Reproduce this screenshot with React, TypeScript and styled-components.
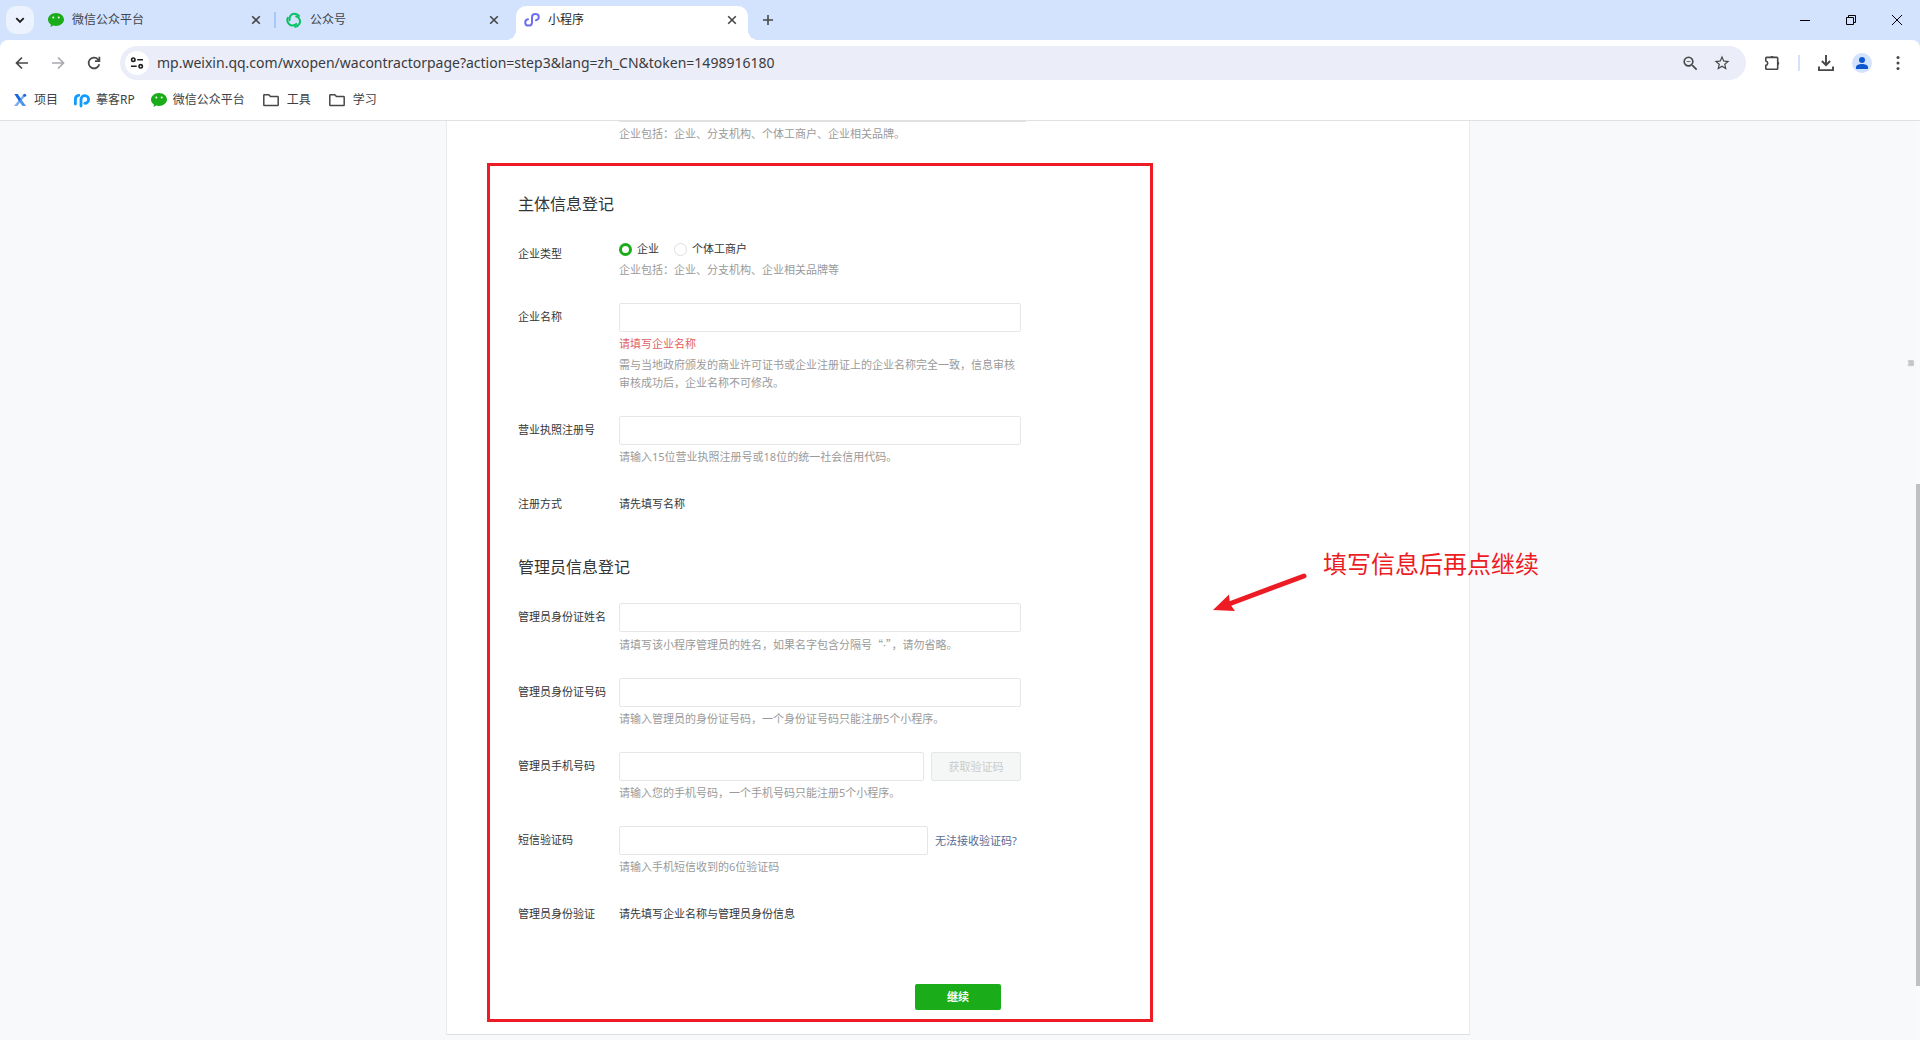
import React from "react";
import styled, { createGlobalStyle } from "styled-components";
import { MdStarBorder, MdZoomOut } from "react-icons/md";

const uiFont = '"Noto Sans", "Noto Sans CJK SC", sans-serif';
const red = "#ed1c24";

const GlobalStyle = createGlobalStyle`
  *, *::before, *::after { box-sizing: border-box; }
  body { margin: 0; background: #fff; font-family: ${uiFont}; font-size: 12px; color: #1f1f1f; overflow: hidden; }
  button, input { font: inherit; color: inherit; }
  svg { display: block; flex: none; }
`;

const Window = styled.div`
  display: flex;
  flex-direction: column;
  height: 100vh;
  min-width: 0;
  background: #d3e3fd;
`;

/* ---------- tab strip ---------- */

const TabStrip = styled.div`
  display: flex;
  align-items: center;
  height: 40px;
  padding-left: 6px;
`;

const IconButton = styled.button<{ $size?: number }>`
  display: flex;
  align-items: center;
  justify-content: center;
  flex: none;
  width: ${(p) => p.$size ?? 28}px;
  height: ${(p) => p.$size ?? 28}px;
  padding: 0;
  border: 0;
  border-radius: 50%;
  background: none;
  color: #474747;
`;

const TabSearch = styled(IconButton)`
  border-radius: 10px;
  background: #ecf3fe;
  margin-right: 6px;
  color: #1f1f1f;
`;

const Tabs = styled.div`
  display: flex;
  align-items: flex-end;
  align-self: stretch;
`;

const Tab = styled.div<{ $active?: boolean }>`
  position: relative;
  display: flex;
  align-items: center;
  gap: 8px;
  width: 232px;
  height: 34px;
  padding: 0 6px 6px 8px;
  border-radius: 10px 10px 0 0;
  background: ${(p) => (p.$active ? "#fff" : "transparent")};
  color: ${(p) => (p.$active ? "#1f1f1f" : "#40454d")};

  &::before,
  &::after {
    content: "";
    display: ${(p) => (p.$active ? "block" : "none")};
    position: absolute;
    bottom: 0;
    width: 10px;
    height: 10px;
  }
  &::before { right: 100%; background: radial-gradient(circle at 0 0, transparent 10px, #fff 10px); }
  &::after { left: 100%; background: radial-gradient(circle at 100% 0, transparent 10px, #fff 10px); }
`;

const TabTitle = styled.span`
  flex: 1;
  line-height: 18px;
  white-space: nowrap;
`;

const TabGap = styled.div<{ $line?: boolean }>`
  width: 6px;
  height: 16px;
  margin-bottom: 12px;
  padding: 0 2px;
  background: ${(p) => (p.$line ? "#a8c7fa" : "transparent")};
  background-clip: content-box;
`;

const NewTab = styled(IconButton)`
  margin-left: 6px;
`;

const WindowControls = styled.div`
  display: flex;
  margin-left: auto;
  color: #000;
`;

const WindowButton = styled(IconButton)`
  width: 46px;
  height: 40px;
  border-radius: 0;
  color: #000;
`;

/* ---------- toolbar ---------- */

const Chrome = styled.header`
  background: #fff;
  border-radius: 8px 8px 0 0;
  border-bottom: 1px solid #dfe1e5;
`;

const Toolbar = styled.div`
  display: flex;
  align-items: center;
  gap: 8px;
  padding: 6px 8px;
`;

const Omnibox = styled.div`
  display: flex;
  align-items: center;
  gap: 8px;
  flex: 1;
  height: 34px;
  margin: 0 4px;
  padding: 0 12px 0 5px;
  border-radius: 17px;
  background: #ebeef8;
`;

const SiteButton = styled(IconButton)`
  background: #fff;
  color: #1f1f1f;
`;

const Address = styled.input`
  flex: 1;
  min-width: 0;
  padding: 0;
  border: 0;
  outline: 0;
  background: none;
  font-family: "Noto Sans", sans-serif;
  font-size: 14px;
  line-height: 20px;
  color: #3a3b3e;
`;

const ToolbarLine = styled.div`
  width: 2px;
  height: 16px;
  margin: 0 4px;
  background: #d3e3fd;
`;

const Bookmarks = styled.nav`
  display: flex;
  align-items: center;
  gap: 16px;
  height: 28px;
  margin-bottom: 6px;
  padding-left: 12px;
`;

const Bookmark = styled.a`
  display: flex;
  align-items: center;
  gap: 6px;
  line-height: 18px;
  color: #3c3f43;
  text-decoration: none;
  white-space: nowrap;
`;

/* ---------- page ---------- */

const Viewport = styled.div`
  position: relative;
  display: flex;
  flex: 1;
  min-height: 0;
  overflow: hidden;
  background: #f8f9fb;
`;

const Content = styled.main`
  flex: 1;
  min-width: 0;
  font-size: 11px;
  line-height: 18px;
  color: #353535;
`;

const Card = styled.div`
  position: relative;
  max-width: 1024px;
  margin: 0 auto;
  padding: 0 40px 12px;
  border: 1px solid #e9ebed;
  border-top: 0;
  border-bottom-color: #dcdee0;
  background: #fff;
`;

const Previous = styled.div`
  width: 407px;
  margin: 0 0 20px 132px;
  padding-top: 3px;
  border-top: 1px solid #e0e0e0;
`;

const Highlight = styled.section`
  max-width: 666px;
  padding: 26px 28px 9px;
  border: 3px solid ${red};
`;

const Form = styled.form`
  display: flex;
  flex-direction: column;
  max-width: 503px;
`;

const Heading = styled.h2<{ $spaced?: boolean }>`
  margin: ${(p) => (p.$spaced ? 18 : 0)}px 0 24px;
  font-size: 16px;
  line-height: 24px;
  font-weight: 400;
`;

const Row = styled.div`
  display: grid;
  grid-template-columns: 101px 1fr;
  margin-bottom: 24px;
`;

const Label = styled.label`
  padding-top: 5px;
  white-space: nowrap;
`;

const Caption = styled.span`
  padding-top: 5px;
  white-space: nowrap;
`;

const Field = styled.div`
  display: flex;
  flex-direction: column;
  gap: 3px;
`;

const Controls = styled.div`
  display: flex;
  align-items: center;
  gap: 7px;
`;

const TextInput = styled.input`
  flex: 1;
  min-width: 0;
  height: 29px;
  padding: 0 8px;
  border: 1px solid #e4e6e8;
  border-radius: 2px;
  outline: 0;
  background: #fff;
`;

const Hint = styled.p<{ $error?: boolean }>`
  margin: 0;
  color: ${(p) => (p.$error ? "#e15f63" : "#9a9a9a")};
`;

/* Quotation marks set at full CJK width. */
const WideQuote = styled.span`
  font-family: "Noto Sans CJK SC", sans-serif;
`;

const CodeButton = styled.button`
  width: 90px;
  height: 29px;
  padding: 0;
  border: 1px solid #e4e6e8;
  border-radius: 2px;
  background: #f5f7f6;
  color: #c9cccb;
`;

const HelpLink = styled.a`
  width: 86px;
  color: #576b95;
  text-decoration: none;
  white-space: nowrap;
`;

const Radios = styled.div`
  display: flex;
  gap: 15px;
`;

const RadioLabel = styled.label`
  display: flex;
  align-items: center;
  gap: 5px;
`;

const Radio = styled.input`
  appearance: none;
  width: 13px;
  height: 13px;
  margin: 0;
  border: 1px solid #dcdfe0;
  border-radius: 50%;
  background: #fff;

  &:checked { border: 3px solid #1aad19; }
`;

const Actions = styled.div`
  display: flex;
  justify-content: flex-end;
  margin-top: 37px;
  padding-right: 20px;
`;

const Submit = styled.button`
  width: 86px;
  height: 26px;
  padding: 0;
  border: 0;
  border-radius: 2px;
  background: #1aad19;
  color: #fff;
  font-weight: 700;
`;

/* The note and its arrow are drawn over the card and its right margin. */
const Note = styled.aside`
  position: absolute;
  left: 766px;
  top: 425px;
  display: flex;
  gap: 16px;
  color: ${red};
  font-size: 24px;
  line-height: 36px;
  white-space: nowrap;

  svg { margin-top: 27px; }
`;

const ScrollTrack = styled.div`
  display: flex;
  flex-direction: column;
  width: 4px;
  padding: 363px 0 54px;
  background: #fafafa;
`;

const ScrollThumb = styled.div`
  flex: 1;
  background: #c1c1c1;
`;

const SidePuzzle = styled.div`
  position: absolute;
  right: 5px;
  top: 238px;
  color: #c4c6c9;
`;

/* ---------- drawings ---------- */

const Wechat = () => (
  <svg width="16" height="16" viewBox="0 0 16 16">
    <path fill="#1aad19" d="M8 1C3.6 1 0 3.9 0 7.6c0 2.100 1.200 3.900 3 5.100L2.400 15l2.900-1.500c.9.200 1.800.4 2.700.4 4.400 0 8-2.800 8-6.400S12.400 1 8 1z" />
    <circle cx="5.300" cy="5.600" r="1" fill="#fff" />
    <circle cx="10.700" cy="5.600" r="1" fill="#fff" />
  </svg>
);

const OfficialAccount = () => (
  <svg width="16" height="16" viewBox="0 0 16 16" fill="none" stroke="#07c160" strokeWidth="2" strokeLinecap="round">
    <path d="M3.600 8.200C2.900 4.500 5.300 1.700 8.400 1.700c2 0 3.700.9 4.700 2.300" />
    <path d="M3.600 8.200C2.900 4.500 5.300 1.700 8.400 1.700c2 0 3.700.9 4.700 2.300" transform="rotate(120 8 8.200)" />
    <path d="M3.600 8.200C2.900 4.500 5.300 1.700 8.400 1.700c2 0 3.700.9 4.700 2.300" transform="rotate(240 8 8.200)" />
  </svg>
);

const MiniProgram = () => (
  <svg width="16" height="16" viewBox="0 0 16 16" fill="none" stroke="#6f6ff2" strokeWidth="2" strokeLinecap="round">
    <path d="M4 7.300C2.300 7.600 1.200 8.700 1.200 10.400c0 1.800 1.500 3.200 3.400 3.200S8 12.300 8 10.400V5.200C8 3.400 9.500 2 11.400 2s3.400 1.300 3.400 3.100c0 1.700-1.200 2.800-2.900 3.200" />
  </svg>
);

const Cross = () => (
  <svg width="20" height="20" viewBox="0 0 20 20" stroke="currentColor" strokeWidth="1.600">
    <path d="M6.200 6.200l7.600 7.600M13.800 6.200l-7.600 7.600" />
  </svg>
);

const BookmarkX = () => (
  <svg width="16" height="16" viewBox="0 0 16 16">
    <path fill="#7fb0ee" d="M2 14h3.400l8.200-10.500-1.800-1.500z" />
    <path fill="#1668dc" d="M2.300 2h3.500l3.400 5.200-2 2.200z" />
    <path fill="#4f92ea" d="M9.200 7.200L14 14h-3.600L7.200 9.400z" />
    <circle cx="12.700" cy="3.300" r="1.500" fill="#1668dc" />
  </svg>
);

const RpLogo = () => (
  <svg width="16" height="16" viewBox="0 0 16 16" fill="none" stroke="#0f9bff" strokeWidth="2.800" strokeLinecap="round">
    <path d="M1.400 12V7.200c0-2.300 1.200-3.700 3.400-3.800" />
    <path d="M7 14V7.400a3.800 3.800 0 1 1 3.800 3.900" />
  </svg>
);

const Folder = () => (
  <svg width="20" height="16" viewBox="0 0 20 16" fill="none" stroke="#474747" strokeWidth="1.500" strokeLinejoin="round">
    <path d="M2.800 13V3.300c0-.3.200-.6.600-.6h4.400l1.700 1.900h7.100c.4 0 .6.300.6.600V13c0 .3-.2.600-.6.600H3.400c-.4 0-.6-.3-.6-.6z" />
  </svg>
);

const Arrow = ({ flip }: { flip?: boolean }) => (
  <svg width="16" height="16" viewBox="0 0 16 16" fill="none" stroke={flip ? "#a9abae" : "#474747"} strokeWidth="1.700">
    <path d={flip ? "M2 8h11.500M8 2.500L13.500 8 8 13.500" : "M14 8H2.500M8 2.500L2.500 8 8 13.500"} />
  </svg>
);

const Puzzle = ({ size, solid }: { size: number; solid?: boolean }) => (
  <svg width={size} height={size} viewBox="0 0 18 18" fill={solid ? "currentColor" : "none"} stroke="currentColor" strokeWidth="1.600" strokeLinejoin="round">
    <path d="M3.600 3.400h10.300c.5 0 .8.300.8.800v10.200c0 .5-.3.800-.8.800H3.600c-.5 0-.8-.3-.8-.8v-3c1.200-.3 1.900-1.100 1.900-2.200s-.7-1.900-1.900-2.200V4.200c0-.5.3-.8.800-.8z" />
    <path d="M7.200 3.200a1.900 1.900 0 0 1 3.600 0zM15 7.400a1.900 1.900 0 0 1 0 3.600z" fill="currentColor" stroke="none" />
  </svg>
);

const tabs = [
  { title: "微信公众平台", icon: <Wechat /> },
  { title: "公众号", icon: <OfficialAccount /> },
  { title: "小程序", icon: <MiniProgram />, active: true },
];

const bookmarks = [
  { title: "项目", icon: <BookmarkX /> },
  { title: "摹客RP", icon: <RpLogo /> },
  { title: "微信公众平台", icon: <Wechat /> },
  { title: "工具", icon: <Folder /> },
  { title: "学习", icon: <Folder /> },
];

type FieldRowProps = {
  id: string;
  label: string;
  hint: React.ReactNode;
  error?: string;
  extra?: React.ReactNode;
};

const FieldRow = ({ id, label, hint, error, extra }: FieldRowProps) => (
  <Row>
    <Label htmlFor={id}>{label}</Label>
    <Field>
      <Controls>
        <TextInput id={id} type="text" />
        {extra}
      </Controls>
      {error && <Hint $error>{error}</Hint>}
      <Hint>{hint}</Hint>
    </Field>
  </Row>
);

const StaticRow = ({ label, text }: { label: string; text: string }) => (
  <Row>
    <Caption>{label}</Caption>
    <Caption>{text}</Caption>
  </Row>
);

export default function App() {
  return (
    <Window>
      <GlobalStyle />
      <TabStrip>
        <TabSearch aria-label="搜索标签页">
          <svg width="12" height="12" viewBox="0 0 12 12" fill="none" stroke="currentColor" strokeWidth="1.900">
            <path d="M2.300 4.200L6 7.900l3.700-3.700" />
          </svg>
        </TabSearch>
        <Tabs>
          {tabs.map((t, i) => (
            <React.Fragment key={t.title}>
              <Tab $active={t.active}>
                {t.icon}
                <TabTitle>{t.title}</TabTitle>
                <IconButton $size={20} aria-label="关闭标签页">
                  <Cross />
                </IconButton>
              </Tab>
              {i < 2 && <TabGap $line={i === 0} />}
            </React.Fragment>
          ))}
        </Tabs>
        <NewTab aria-label="新建标签页">
          <svg width="12" height="12" viewBox="0 0 12 12" stroke="currentColor" strokeWidth="1.600">
            <path d="M6 1v10M1 6h10" />
          </svg>
        </NewTab>
        <WindowControls>
          <WindowButton aria-label="最小化">
            <svg width="10" height="10" viewBox="0 0 10 10"><path d="M0 5h10v1H0z" /></svg>
          </WindowButton>
          <WindowButton aria-label="还原">
            <svg width="10" height="10" viewBox="0 0 10 10" fill="none" stroke="currentColor">
              <path d="M.5 2.500h7v7h-7zM2.500 2.500v-2h7v7h-2" />
            </svg>
          </WindowButton>
          <WindowButton aria-label="关闭">
            <svg width="10" height="10" viewBox="0 0 10 10" stroke="currentColor"><path d="M0 0l10 10M10 0L0 10" /></svg>
          </WindowButton>
        </WindowControls>
      </TabStrip>

      <Chrome>
        <Toolbar>
          <IconButton aria-label="后退"><Arrow /></IconButton>
          <IconButton aria-label="前进"><Arrow flip /></IconButton>
          <IconButton aria-label="重新加载">
            <svg width="16" height="16" viewBox="0 0 16 16" fill="none" stroke="currentColor" strokeWidth="1.700">
              <path d="M13.300 9.300A5.400 5.400 0 1 1 12 4.300l1.200 1.400" />
              <path d="M13.400 1.700v4.400H9" />
            </svg>
          </IconButton>
          <Omnibox>
            <SiteButton $size={24} aria-label="查看网站信息">
              <svg width="14" height="14" viewBox="0 0 14 14" fill="none" stroke="currentColor" strokeWidth="1.600">
                <circle cx="3.300" cy="3.700" r="1.700" />
                <path d="M7.300 3.700H13M1 10.300h5.700" />
                <circle cx="10.700" cy="10.300" r="1.700" />
              </svg>
            </SiteButton>
            <Address
              type="text"
              aria-label="地址栏"
              defaultValue="mp.weixin.qq.com/wxopen/wacontractorpage?action=step3&lang=zh_CN&token=1498916180"
            />
            <IconButton $size={24} aria-label="缩放">
              <MdZoomOut size={19} />
            </IconButton>
            <IconButton $size={24} aria-label="收藏">
              <MdStarBorder size={18} />
            </IconButton>
          </Omnibox>
          <IconButton aria-label="扩展程序">
            <Puzzle size={18} />
          </IconButton>
          <ToolbarLine />
          <IconButton aria-label="下载">
            <svg width="18" height="18" viewBox="0 0 18 18" fill="none" stroke="currentColor" strokeWidth="1.900">
              <path d="M9 1v9.800M4.900 7L9 11.100 13.100 7M2 12.400v3.700h14v-3.700" />
            </svg>
          </IconButton>
          <IconButton aria-label="个人资料">
            <svg width="20" height="20" viewBox="0 0 20 20">
              <circle cx="10" cy="10" r="10" fill="#d3e3fd" />
              <circle cx="10" cy="7" r="3" fill="#0b57d0" />
              <path d="M4 16v-1.700c0-2.300 3.200-3.300 6-3.300s6 1 6 3.300V16z" fill="#0b57d0" />
            </svg>
          </IconButton>
          <IconButton aria-label="更多">
            <svg width="16" height="16" viewBox="0 0 16 16" fill="currentColor">
              <circle cx="8" cy="2.600" r="1.500" />
              <circle cx="8" cy="8" r="1.500" />
              <circle cx="8" cy="13.400" r="1.500" />
            </svg>
          </IconButton>
        </Toolbar>
        <Bookmarks>
          {bookmarks.map((b) => (
            <Bookmark key={b.title} href="#">
              {b.icon}
              {b.title}
            </Bookmark>
          ))}
        </Bookmarks>
      </Chrome>

      <Viewport>
        <Content>
          <Card>
            <Previous>
              <Hint>企业包括：企业、分支机构、个体工商户、企业相关品牌。</Hint>
            </Previous>
            <Highlight>
              <Form onSubmit={(e) => e.preventDefault()}>
                <Heading>主体信息登记</Heading>
                <Row>
                  <Caption>企业类型</Caption>
                  <Field>
                    <Radios role="radiogroup" aria-label="企业类型">
                      <RadioLabel>
                        <Radio type="radio" name="kind" defaultChecked />
                        企业
                      </RadioLabel>
                      <RadioLabel>
                        <Radio type="radio" name="kind" />
                        个体工商户
                      </RadioLabel>
                    </Radios>
                    <Hint>企业包括：企业、分支机构、企业相关品牌等</Hint>
                  </Field>
                </Row>
                <FieldRow
                  id="company"
                  label="企业名称"
                  error="请填写企业名称"
                  hint="需与当地政府颁发的商业许可证书或企业注册证上的企业名称完全一致，信息审核审核成功后，企业名称不可修改。"
                />
                <FieldRow id="license" label="营业执照注册号" hint="请输入15位营业执照注册号或18位的统一社会信用代码。" />
                <StaticRow label="注册方式" text="请先填写名称" />

                <Heading $spaced>管理员信息登记</Heading>
                <FieldRow
                  id="admin-name"
                  label="管理员身份证姓名"
                  hint={
                    <>
                      请填写该小程序管理员的姓名，如果名字包含分隔号<WideQuote>“</WideQuote>·<WideQuote>”</WideQuote>，请勿省略。
                    </>
                  }
                />
                <FieldRow
                  id="admin-id"
                  label="管理员身份证号码"
                  hint="请输入管理员的身份证号码，一个身份证号码只能注册5个小程序。"
                />
                <FieldRow
                  id="admin-phone"
                  label="管理员手机号码"
                  hint="请输入您的手机号码，一个手机号码只能注册5个小程序。"
                  extra={<CodeButton type="button" disabled>获取验证码</CodeButton>}
                />
                <FieldRow
                  id="sms-code"
                  label="短信验证码"
                  hint="请输入手机短信收到的6位验证码"
                  extra={<HelpLink href="#">无法接收验证码?</HelpLink>}
                />
                <StaticRow label="管理员身份验证" text="请先填写企业名称与管理员身份信息" />
                <Actions>
                  <Submit type="submit">继续</Submit>
                </Actions>
              </Form>
            </Highlight>
            <Note>
              <svg width="94" height="40" viewBox="0 0 94 40">
                <path d="M91 3L16 31" stroke={red} strokeWidth="5" strokeLinecap="round" />
                <path d="M0 37L16 21.500 17 31 22 38z" fill={red} />
              </svg>
              填写信息后再点继续
            </Note>
          </Card>
        </Content>
        <ScrollTrack>
          <ScrollThumb />
        </ScrollTrack>
        <SidePuzzle>
          <Puzzle size={8} solid />
        </SidePuzzle>
      </Viewport>
    </Window>
  );
}
